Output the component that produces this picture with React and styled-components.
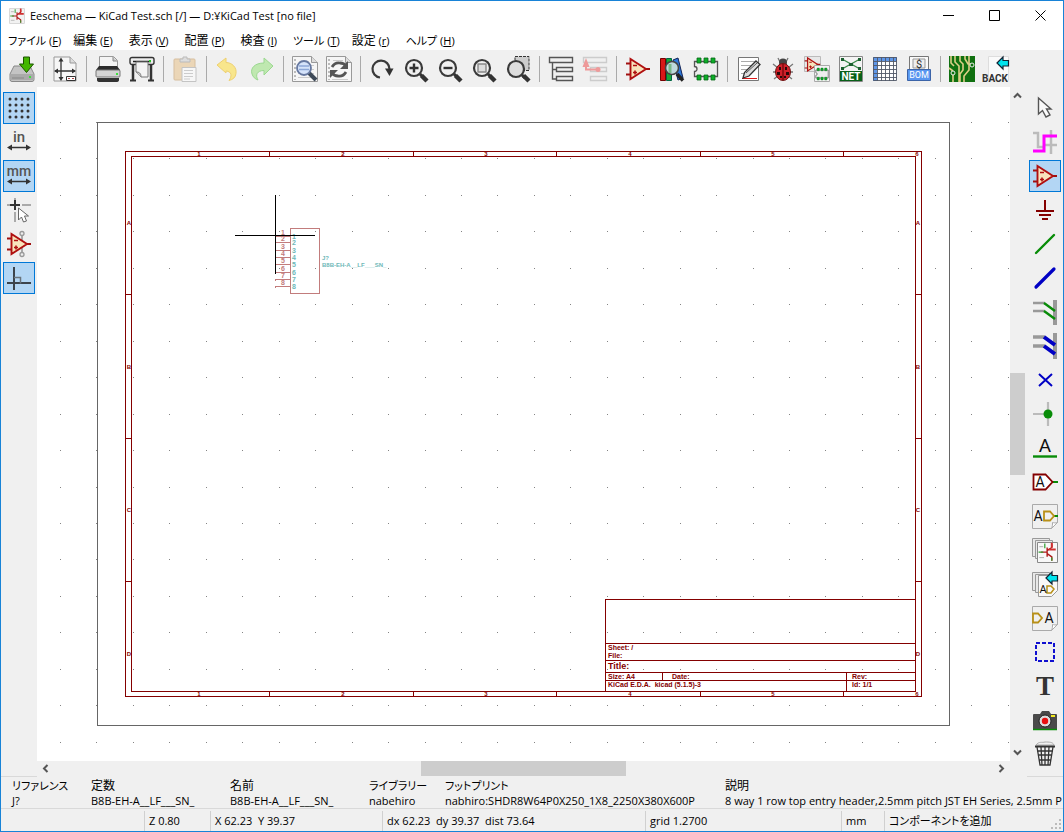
import React from 'react';
import styled, { createGlobalStyle, css } from 'styled-components';

const GlobalStyle = createGlobalStyle`
  * {
    box-sizing: border-box;
  }
  body {
    margin: 0;
    background: #f0f0f0;
    color: #000;
    font-family: 'Open Sans', 'Noto Sans CJK JP', sans-serif;
    font-size: 11px;
    line-height: 16px;
    font-feature-settings: 'palt';
  }
  button {
    margin: 0;
    padding: 0;
    border: 0;
    background: transparent;
    color: inherit;
    font: inherit;
    font-feature-settings: inherit;
  }
`;

const RED = '#840000';
const GRAY = '#555';

/* ---------- shared icon pieces ---------- */

const OpAmp = () => (
  <g>
    <path d="M1 7.500h5M1 18.500h5M20 13h5" stroke="#a01010" strokeWidth="1.800" />
    <path d="M5.500 3v20L21 13z" fill="#f8e4bc" stroke="#b01010" strokeWidth="1.900" />
    <path d="M8 9.500h4M8 16.500h4M10 14.500v4" stroke="#b01010" strokeWidth="1.600" />
  </g>
);

const Paper = ({ x = 2, y = 1, w = 22, h = 24, fill = '#f6f6f6' }) => (
  <g>
    <path d={`M${x} ${y}h${w - 6}l6 6v${h - 6}h${-w}z`} fill={fill} stroke="#999" />
    <path d={`M${x + w - 6} ${y}v6h6`} fill="#ddd" stroke="#999" />
  </g>
);

// sheet with the folded corner at the bottom
const Card = () => (
  <g>
    <path d="M.5 1.500h25v18l-6 6h-19z" fill="#f0f0f0" stroke="#aaa" />
    <path d="M25.500 19.500c-2 1-4 0-5 0 0 2 0 4-1 6z" fill="#fff" stroke="#aaa" />
  </g>
);

const Lens = ({ cx = 11, cy = 12, r = 8, fill = '#f0f0f0' }) => (
  <g>
    <path d={`M${cx + 6} ${cy + 6}l3 3`} stroke="#333" strokeWidth="3" />
    <path d="M18.500 19.500L24 25" stroke="#333" strokeWidth="4.500" />
    <circle cx={cx} cy={cy} r={r} fill={fill} stroke="#3a3a3a" strokeWidth="2.200" />
  </g>
);

const Chip = () => (
  <g>
    <path d="M1.500 5.500h23v15h-23v-5a2.500 2.500 0 0 0 0-5z" fill="#eee" stroke="#555" strokeWidth="1.300" />
    <path
      d="M4 2h4v5H4zM11 2h4v5h-4zM18 2h4v5h-4zM4 19h4v5H4zM11 19h4v5h-4zM18 19h4v5h-4z"
      fill="#0cae28"
      stroke="#086818"
      strokeWidth=".8"
    />
  </g>
);

const BackArrow = () => (
  <path d="M14 7l6-6v3.500h5.500v5.500H20V13z" fill="#00e4ee" stroke="#123" strokeWidth="1.200" />
);

const Sheets = () => (
  <g fill="#e8e8e8" stroke="#999">
    <path d="M.5 1.500h17v18H.5z" />
    <path d="M3.500 3.500h17v18h-17z" />
  </g>
);

const Schematic = () => (
  <g fill="none">
    <path d="M13 7v12M5 13h8M13 11l6-4V3M13 15l6 4v5" stroke="#b01818" strokeWidth="1.800" />
    <path d="M15 9.500h9M19 1v6" stroke="#d03030" strokeWidth="2.600" />
    <path d="M2 13h6M10 2v6M19 24v-4" stroke="#30a030" strokeWidth="1.600" />
    <path d="M3 6h5M3 20h6" stroke="#999" />
  </g>
);

const DimensionArrow = () => (
  <g>
    <path d="M3 18.500h20" stroke="#333" strokeWidth="1.500" />
    <path d="M1 18.500l5-3v6zM25 18.500l-5-3v6z" fill="#333" />
  </g>
);

const icons = {
  save: (
    <g>
      <path d="M5 10h16l4 8v5.500q0 2-2 2H3q-2 0-2-2V18z" fill="#c4c4c4" stroke="#888" />
      <path d="M1.500 18h23v6h-23z" fill="#aaa" />
      <path d="M3 22h12" stroke="#888" />
      <path d="M20 20h2v2h-2z" fill="#3fe03f" />
      <path d="M14.500 1h6v7h4l-7 8.500-7-8.500h4z" fill="#43b600" stroke="#1d5400" />
    </g>
  ),
  page: (
    <g>
      <Paper />
      <path d="M9 3v20M3 15h20" stroke="#333" strokeWidth="1.300" />
      <path d="M9 1.500l2.500 4h-5zM9 25l2.500-4h-5zM2 15l4-2.500v5zM24 15l-4-2.500v5z" fill="#333" />
      <path d="M14.500 20.500h9v4h-9z" fill="#fff" stroke="#333" />
      <path d="M16 22.500h2M20 22.500h2" stroke="#a44" />
    </g>
  ),
  print: (
    <g>
      <path d="M4.500 11V.5h14l4 4V11z" fill="#f4f4f4" stroke="#999" />
      <path d="M18 1v4h4" fill="#ccc" stroke="#888" />
      <path d="M4 10h18l3 4v5H1v-5z" fill="#2c2c2c" />
      <rect x="1" y="14" width="24" height="7" rx="1" fill="#d4d4d4" stroke="#777" />
      <path d="M2 22h22v2q0 2-3 2H5q-3 0-3-2z" fill="#333" />
      <path d="M21 17h2v2h-2z" fill="#3fe03f" />
    </g>
  ),
  plot: (
    <g>
      <path d="M4 7v17M22 7v17" stroke="#333" strokeWidth="2.500" />
      <path d="M1 24.500h6M19 24.500h6" stroke="#333" strokeWidth="2" />
      <rect x="1" y="1.500" width="24" height="7" rx="2" fill="#eee" stroke="#333" strokeWidth="1.400" />
      <path d="M4 5.500h18" stroke="#222" strokeWidth="1.500" />
      <path d="M7 6h12v15h-7l-5-5z" fill="#f4f4f4" stroke="#777" />
      <path d="M7 16c3 0 5 1 5 5" fill="#ccc" stroke="#777" />
      <path d="M20 4h2v2h-2z" fill="#2ac82a" />
    </g>
  ),
  paste: (
    <g opacity=".5">
      <rect x="2" y="3" width="21" height="21" rx="1" fill="#e8bd80" stroke="#c09050" />
      <path d="M8 6V3h3V1h4v2h3v3z" fill="#ccc" stroke="#888" />
      <path d="M10 11.500h14v14H10z" fill="#fff" stroke="#999" />
      <path d="M12 14.500h9M12 17.500h9M12 20.500h9M12 23h6" stroke="#aaa" />
    </g>
  ),
  undo: (
    <path d="M2 9l9-7v4.500c6 0 11 5 10 11-.5 4-3 6-7 7 3-4 3-9-3-9.500V17z" fill="#f8e68c" stroke="#eed070" />
  ),
  redo: (
    <path d="M24 10l-9-8v5C6 7 1 12 3 18c1 3 3 5 6 6-3-5-1-9.500 6-9.500V19z" fill="#bfe8b0" stroke="#9bd890" />
  ),
  find: (
    <g>
      <Paper x={0.5} y={0.5} w={25} h={25} />
      <path d="M3 3v21" stroke="#bbb" strokeWidth="2" strokeDasharray="2 2" />
      <path d="M7 5.500h10M6 9.500h16M6 13.500h16M6 17.500h16M6 21.500h16" stroke="#ccc" />
      <path d="M17 17l7 7" stroke="#3e4a58" strokeWidth="4" />
      <circle cx="12" cy="12" r="7" fill="#d5e3fa" stroke="#6678a0" strokeWidth="1.800" />
      <path d="M7 10h10M7 13.500h10" stroke="#8ca7d8" strokeWidth="1.400" />
    </g>
  ),
  replace: (
    <g>
      <Paper x={0.5} y={0.5} w={25} h={25} />
      <path d="M3 3v21" stroke="#bbb" strokeWidth="2" strokeDasharray="2 2" />
      <path d="M7 4.500h10M6 23.500h16" stroke="#ccc" />
      <path d="M6 11q3-5 8-4 4 0 6 3M20 16q-3 5-8 4-4 0-6-3" fill="none" stroke="#555" strokeWidth="2.800" />
      <path d="M22 5v8h-8zM4 22v-8h8z" fill="#555" />
    </g>
  ),
  refresh: (
    <g>
      <path d="M11 21.500A8.500 8.500 0 1 1 20.500 13" fill="none" stroke="#3a3a3a" strokeWidth="2.200" />
      <path d="M16 12.500h8.500L20.500 20z" fill="#333" />
    </g>
  ),
  zoomIn: (
    <g>
      <Lens />
      <path d="M6.500 12h9M11 7.500v9" stroke="#333" strokeWidth="2.400" />
    </g>
  ),
  zoomOut: (
    <g>
      <Lens />
      <path d="M6.500 12h9" stroke="#333" strokeWidth="2.400" />
    </g>
  ),
  zoomFit: (
    <g>
      <Lens />
      <path d="M7 8h8v8H7z" fill="#ddd" stroke="#888" strokeWidth="1.400" />
    </g>
  ),
  zoomArea: (
    <g>
      <path d="M10 .5h14v14H10z" fill="#ccc" stroke="#333" strokeDasharray="3 1" />
      <Lens cy={13} fill="#ddd" />
    </g>
  ),
  hierarchy: (
    <g fill="none" stroke="#555" strokeWidth="1.400">
      <path d="M1.500 1.500h23v5h-23zM8.500 11.500h16v4h-16zM8.500 20.500h16v4h-16zM4.500 7v16h4M4.500 13.500h4" />
    </g>
  ),
  leave: (
    <g fill="none">
      <path d="M1.500 1.500h23v5h-23zM8.500 11.500h16v4h-16zM8.500 20.500h16v4h-16z" stroke="#ccc" strokeWidth="1.400" />
      <path d="M4 7v6.500h12" stroke="#ee9a9a" strokeWidth="2" />
      <path d="M4 2l3.500 9h-7z" fill="#ee9a9a" />
      <circle cx="16" cy="13.500" r="2.500" fill="#ee9a9a" />
    </g>
  ),
  opamp: <OpAmp />,
  library: (
    <g>
      <path d="M1.500 2.500h5v22h-5z" fill="#d81818" stroke="#700" />
      <path d="M7.500 2.500h5v22h-5z" fill="#18a838" stroke="#064" />
      <path d="M14 4l5-2 5 20-5 2z" fill="#2c78dc" stroke="#125" />
      <path d="M18 18l6 6.500" stroke="#222" strokeWidth="3.500" />
      <circle cx="13" cy="12" r="6.500" fill="#bed8dc" stroke="#444" strokeWidth="1.600" />
      <path d="M11 8v9" stroke="#78b888" strokeWidth="3" />
    </g>
  ),
  chip: <Chip />,
  edit: (
    <g>
      <path d="M2.500 1.500h20v23h-20z" fill="#fff" stroke="#777" />
      <path d="M5 5.500h15M5 9.500h13M5 13.500h8M5 17.500h5" stroke="#aaa" />
      <path d="M6 22.500h15" stroke="#e01818" />
      <path d="M20 5l4 3.500L13 20l-6 2 1.500-5.500z" fill="#ddd" stroke="#333" strokeWidth="1.300" />
      <path d="M10 17L21 7" stroke="#555" />
    </g>
  ),
  bug: (
    <g>
      <path d="M8 2l2 4M18 2l-2 4M3 8l5 4M23 8l-5 4M3 16h20M4 23l5-4M22 23l-5-4" stroke="#777" strokeWidth="1.300" />
      <circle cx="13" cy="6.500" r="4" fill="#444" />
      <ellipse cx="13" cy="16" rx="7.500" ry="8.500" fill="#d0202a" stroke="#701010" />
      <path d="M13 8v16" stroke="#500" />
      <path d="M9 11h2v3H9zM15 11h2v3h-2zM7 16h3v3H7zM16 16h3v3h-3zM10 20h2v2h-2zM14 20h2v2h-2z" fill="#2a0a0a" />
    </g>
  ),
  assign: (
    <g>
      <path d="M.5.5h16v15H.5z" fill="#e8e8e8" stroke="#bbb" />
      <g transform="scale(.65)">
        <OpAmp />
      </g>
      <path d="M10.500 9.500h15v16h-15z" fill="#f4f4f4" stroke="#aaa" />
      <g transform="translate(11 11) scale(.54)">
        <Chip />
      </g>
    </g>
  ),
  net: (
    <g>
      <path d="M1.500.5h23v25h-23z" fill="#f4f4f4" stroke="#888" />
      <path d="M4 3l9 5 9-5M4 13l9-5 9 5" fill="none" stroke="#3a8a4a" strokeWidth="1.300" />
      <path d="M3 2h3v3H3zM20 2h3v3h-3zM3 11h3v3H3zM20 11h3v3h-3zM11 7h4v3h-4z" fill="#1c6030" />
      <path d="M2 15h22v10H2z" fill="#086018" />
      <text x="13" y="24" fontSize="10" fontWeight="700" textAnchor="middle" fill="#fff">
        NET
      </text>
    </g>
  ),
  table: (
    <g>
      <path d="M1.500 1.500h23v23h-23z" fill="#fff" />
      <path d="M1 1h24v4H5v20H1z" fill="#5f97e8" />
      <path
        d="M1.500 1.500h23v23h-23zM1 5.500h24M1 9.500h24M1 13.500h24M1 17.500h24M1 21.500h24M5.500 1v24M9.500 1v24M13.500 1v24M17.500 1v24M21.500 1v24"
        fill="none"
        stroke="#505868"
        strokeWidth=".9"
      />
    </g>
  ),
  bom: (
    <g>
      <path d="M3.500.5h19v15h-19z" fill="#fafafa" stroke="#777" />
      <path d="M7 3h12v9H7z" fill="#eee" stroke="#999" />
      <path d="M1.500 13.500h23v11h-23z" fill="#5a96f0" stroke="#3c64a8" />
      <text x="13" y="12" fontSize="11" textAnchor="middle" fill="#333">
        $
      </text>
      <text x="13" y="22" fontSize="9" textAnchor="middle" fill="#fff">
        BOM
      </text>
    </g>
  ),
  pcb: (
    <g>
      <path d="M0 0h26v26H0z" fill="#107010" />
      <path
        d="M2 0v7l3 3M6 0v6l4 4v16M11 0v5l3 3v6l-3 4v8M16 0v3l3 5h4M0 12l4 3M4 17v9M15 26v-6l5-6V0"
        fill="none"
        stroke="#dccf86"
        strokeWidth="1.600"
      />
      <circle cx="23" cy="9" r="2" fill="#107010" stroke="#eee" />
      <circle cx="4" cy="17" r="2" fill="#107010" stroke="#eee" />
    </g>
  ),
  back: (
    <g>
      <path d="M5.500.5h20v24h-20z" fill="#fafafa" stroke="#ddd" />
      <BackArrow />
      <text x="12" y="26" fontSize="10" fontWeight="700" textAnchor="middle" fill="#333">
        BACK
      </text>
    </g>
  ),
  grid: (
    <path
      d="M4 4h19M4 10h19M4 16h19M4 22h19"
      stroke="#333"
      strokeWidth="3"
      strokeLinecap="round"
      strokeDasharray="0 6"
    />
  ),
  inches: (
    <g>
      <text x="13" y="13" fontSize="15" fontWeight="500" textAnchor="middle" fill={GRAY}>
        in
      </text>
      <DimensionArrow />
    </g>
  ),
  mm: (
    <g>
      <text x="13" y="13" fontSize="14" fontWeight="500" textAnchor="middle" fill={GRAY}>
        mm
      </text>
      <DimensionArrow />
    </g>
  ),
  cursorShape: (
    <g>
      <path d="M1 8h3M16 8h9M9 1v2M9 15v10" stroke="#aaa" strokeWidth="2" />
      <path d="M4 8h10M9 3v10" stroke="#333" strokeWidth="2" />
      <path d="M12.500 11v12l3-3 2 5 3-1-2-5h4z" fill="#fff" stroke="#666" />
    </g>
  ),
  hiddenPins: (
    <g>
      <path d="M16 3v20" stroke="#aaa" strokeWidth="2" />
      <OpAmp />
      <circle cx="16" cy="2.500" r="2" fill="#eee" stroke="#999" strokeWidth="1.300" />
      <circle cx="16" cy="23.500" r="2" fill="#eee" stroke="#999" strokeWidth="1.300" />
    </g>
  ),
  ortho: (
    <g fill="none">
      <path d="M8 2v23M1 18h24" stroke="#3c444c" strokeWidth="2" />
      <path d="M8 12.500h6.500v6" stroke="#6a747c" strokeWidth="1.500" />
    </g>
  ),
  pointer: <path d="M6.500 3v16l4-3.500 3.500 6.500 4-2-3.500-6H19z" fill="#fafafa" stroke="#555" strokeWidth="1.400" />,
  highlight: (
    <g fill="none">
      <path d="M1 4h5v14h6M19 1v24M12 16h13" stroke="#bbb" strokeWidth="2.500" />
      <path d="M1 22h11V7h13" stroke="#f0f" strokeWidth="3" />
    </g>
  ),
  ground: <path d="M13 3v11M4 14h18M7 18h12M10 22h6" stroke={RED} strokeWidth="2" fill="none" />,
  wire: <path d="M4 22L22 4" stroke="#088c08" strokeWidth="2.400" strokeLinecap="round" />,
  bus: <path d="M4 22L22 4" stroke="#0000c4" strokeWidth="3.200" strokeLinecap="round" />,
  wireEntry: (
    <g>
      <path d="M23 1v25" stroke="#999" strokeWidth="4" />
      <path d="M1 4h12M1 12h12" stroke="#999" strokeWidth="2.400" />
      <path d="M12 4l11 8M12 12l11 8" stroke="#088c08" strokeWidth="2.400" />
    </g>
  ),
  busEntry: (
    <g>
      <path d="M23 0v26" stroke="#999" strokeWidth="4" />
      <path d="M1 4h12M1 13h12" stroke="#999" strokeWidth="3.500" />
      <path d="M12 4l11 8M12 13l11 8" stroke="#0000c4" strokeWidth="4" />
    </g>
  ),
  noConnect: <path d="M7 7l13 12M20 7L7 19" stroke="#0000c4" strokeWidth="2" />,
  junction: (
    <g>
      <path d="M1 13h15M16 1v24" stroke="#bbb" strokeWidth="2.200" />
      <circle cx="16" cy="13" r="4.500" fill="#088c08" />
    </g>
  ),
  label: (
    <g>
      <text x="13" y="17" fontSize="19" textAnchor="middle" fill="#111">
        A
      </text>
      <path d="M1 21.500h24" stroke="#088c08" strokeWidth="2.400" />
    </g>
  ),
  globalLabel: (
    <g>
      <path d="M20 13h6" stroke="#088c08" strokeWidth="2" />
      <path d="M1.500 5.500h12l7 7.500-7 7.500h-12z" fill="#fff" stroke={RED} strokeWidth="1.800" />
      <text x="8" y="18" fontSize="14" textAnchor="middle" fill="#111">
        A
      </text>
    </g>
  ),
  hierLabel: (
    <g>
      <Card />
      <path d="M22 13h4" stroke="#088c08" strokeWidth="2" />
      <path d="M12 8.500h6l4 4.500-4 4.500h-6z" fill="none" stroke="#b89018" strokeWidth="1.800" />
      <text x="6" y="18" fontSize="14" textAnchor="middle" fill="#111">
        A
      </text>
    </g>
  ),
  sheet: (
    <g>
      <Sheets />
      <path d="M5.500 5.500h20v20h-20z" fill="#f8f8f8" stroke="#888" />
      <g transform="translate(5 5) scale(.78)">
        <Schematic />
      </g>
    </g>
  ),
  importPin: (
    <g>
      <Sheets />
      <path d="M6.500 4.500h19v15l-6 6h-13z" fill="#f8f8f8" stroke="#999" />
      <path d="M15 15h4l3 3-3 4h-4z" fill="none" stroke="#b89018" strokeWidth="1.500" />
      <BackArrow />
      <text x="11" y="22" fontSize="11" textAnchor="middle" fill="#111">
        A
      </text>
    </g>
  ),
  sheetPin: (
    <g>
      <Card />
      <path d="M1 8.500h5l4 4.500-4 4.500H1z" fill="none" stroke="#b89018" strokeWidth="1.800" />
      <text x="17" y="18" fontSize="14" textAnchor="middle" fill="#111">
        A
      </text>
    </g>
  ),
  lines: <path d="M4 4h18v18H4z" fill="none" stroke="#1010d0" strokeWidth="2" strokeDasharray="4 2" />,
  text: (
    <text x="13" y="22" fontSize="27" fontFamily="Liberation Serif, serif" fontWeight="700" textAnchor="middle" fill="#333">
      T
    </text>
  ),
  image: (
    <g>
      <path d="M8 7l2-3h7l2 3h5q1 0 1 1v14H1V8q0-1 1-1z" fill="#4a4a4a" />
      <path d="M1 22.500h24" stroke="#088c08" strokeWidth="1.500" />
      <circle cx="13" cy="14" r="6" fill="#ddd" stroke="#222" />
      <circle cx="13" cy="14" r="3.200" fill="#e81010" />
      <path d="M19 8h4v2h-4z" fill="#f4ea20" />
    </g>
  ),
  trash: (
    <g fill="none">
      <path d="M4 4c3-4 6-2 9-3 4 0 8 0 9 3z" fill="#f0f0f0" stroke="#aaa" />
      <path d="M3 5.500h20" stroke="#333" strokeWidth="2" />
      <path d="M5 6l3 18h10l3-18M9 6l1 18M13 6v18M17 6l-1 18M5 10h16M6 14h14M7 19h12" stroke="#333" strokeWidth="1.300" />
    </g>
  ),
};

const Icon = ({ name }) => (
  <IconSvg width="26" height="26" viewBox="0 0 26 26" aria-hidden="true">
    {icons[name]}
  </IconSvg>
);

/* ---------- data ---------- */

const menus = [
  ['ファイル', 'F'],
  ['編集', 'E'],
  ['表示', 'V'],
  ['配置', 'P'],
  ['検査', 'I'],
  ['ツール', 'T'],
  ['設定', 'r'],
  ['ヘルプ', 'H'],
];

const toolGroups = [
  ['save'],
  ['page'],
  ['print', 'plot'],
  ['paste'],
  ['undo', 'redo'],
  ['find', 'replace'],
  ['refresh', 'zoomIn', 'zoomOut', 'zoomFit', 'zoomArea'],
  ['hierarchy', 'leave'],
  ['opamp', 'library', 'chip'],
  ['edit', 'bug', 'assign', 'net', 'table', 'bom'],
  ['pcb', 'back'],
];

const leftTools = ['grid', 'inches', 'mm', 'cursorShape', 'hiddenPins', 'ortho'];
const leftActive = ['grid', 'mm', 'ortho'];

const rightTools = [
  'pointer',
  'highlight',
  'opamp',
  'ground',
  'wire',
  'bus',
  'wireEntry',
  'busEntry',
  'noConnect',
  'junction',
  'label',
  'globalLabel',
  'hierLabel',
  'sheet',
  'importPin',
  'sheetPin',
  'lines',
  'text',
  'image',
  'trash',
];

const messages = [
  ['リファレンス', 'J?'],
  ['定数', 'B8B-EH-A__LF___SN_'],
  ['名前', 'B8B-EH-A__LF___SN_'],
  ['ライブラリー', 'nabehiro'],
  ['フットプリント', 'nabhiro:SHDR8W64P0X250_1X8_2250X380X600P'],
  ['説明', '8 way 1 row top entry header,2.5mm pitch JST EH Series, 2.5mm P'],
];

const isKana = (text) => /^[\u30a0-\u30ff]/.test(text);

/* ---------- drawing area ---------- */

const GRID_STEP = 36.45;
const dots = [];
for (let row = 0; row < 40; row += 1) {
  for (let col = 0; col < 60; col += 1) {
    dots.push(`M${Math.round(23 + col * GRID_STEP)} ${Math.round(35 + row * GRID_STEP)}h1v1h-1z`);
  }
}

const columnMarks = [102, 246, 389, 533, 676, 820];
const rowMarks = [101, 245, 388, 532];
const pinRows = [114, 120, 128, 135, 142, 150, 157, 164];

function Sheet() {
  return (
    <SheetSvg role="img" aria-label="KiCad Test.sch">
      <path d={dots.join('')} fill="#848484" />
      <g transform="translate(60 35)">
        <path d="M.5.5h852v603H.5z" stroke="#666" />
        <g stroke={RED}>
          <path d="M28.500 29.500h796v545h-796zM34.500 34.500h784v535h-784z" />
          <path d="M172.500 29v5M316.500 29v5M459.500 29v5M603.500 29v5M746.500 29v5" />
          <path d="M172.500 569v6M316.500 569v6M459.500 569v6M603.500 569v6M746.500 569v6" />
          <path d="M29 172.500h6M29 316.500h6M29 459.500h6M818 172.500h6M818 316.500h6M818 459.500h6" />
          <path d="M508.500 569V477.500h310M508 521.500h310M508 538.500h310M508 550.500h310M508 558.500h310" />
          <path d="M565.500 550v8M749.500 550v19" />
        </g>
        {columnMarks.map((x, i) => (
          <React.Fragment key={x}>
            <Mark x={x} y="34">{i + 1}</Mark>
            <Mark x={x} y="574">{i + 1}</Mark>
          </React.Fragment>
        ))}
        {rowMarks.map((y, i) => (
          <React.Fragment key={y}>
            <Mark x="32" y={y + 2}>{'ABCD'[i]}</Mark>
            <Mark x="821" y={y + 2}>{'ABCD'[i]}</Mark>
          </React.Fragment>
        ))}
        <Plain x="511" y="528">Sheet: /</Plain>
        <Plain x="511" y="536">File:</Plain>
        <Title x="511" y="547">Title:</Title>
        <Plain x="511" y="557">Size: A4</Plain>
        <Plain x="575" y="557">Date:</Plain>
        <Plain x="755" y="557">Rev:</Plain>
        <Plain x="511" y="565">KiCad E.D.A.  kicad (5.1.5)-3</Plain>
        <Plain x="755" y="565">Id: 1/1</Plain>

        <path d="M193.500 106.500h29v65h-29z" stroke="#c27c7c" />
        {pinRows.map((y, i) => (
          <React.Fragment key={y}>
            <path d={`M178 ${y + 0.5}h15M178.500 ${y}v2`} stroke="#c27c7c" />
            <PinNumber x="186" y={y - 1}>{i + 1}</PinNumber>
            <PinName x="195" y={y + 3}>{i + 1}</PinName>
          </React.Fragment>
        ))}
        <FieldText x="225" y="138">J?</FieldText>
        <FieldText x="225" y="145">B8B-EH-A__LF___SN_</FieldText>
        <path d="M178.500 73v79M138 113.500h80" stroke="#000" />
      </g>
    </SheetSvg>
  );
}

const Chevron = ({ d }) => (
  <svg width="9" height="9" viewBox="0 0 9 9" aria-hidden="true">
    <path d={d} fill="none" stroke="#555" strokeWidth="2" />
  </svg>
);

const SideBar = ({ tools, active, label }) => (
  <SideTools aria-label={label}>
    {tools.map((name) => (
      <SideButton key={name} aria-label={name} $active={active.includes(name)}>
        <Icon name={name} />
      </SideButton>
    ))}
  </SideTools>
);

function App() {
  return (
    <Window>
      <GlobalStyle />
      <TitleBar>
        <svg width="16" height="16" viewBox="0 0 26 26" aria-hidden="true">
          <rect x=".5" y=".5" width="25" height="25" rx="2" fill="#f2f2f2" stroke="#bbb" />
          <Schematic />
        </svg>
        <Caption>Eeschema — KiCad Test.sch [/] — D:¥KiCad Test [no file]</Caption>
        <CaptionButton aria-label="minimize">
          <svg width="11" height="11"><path d="M0 5.500h11" stroke="#000" /></svg>
        </CaptionButton>
        <CaptionButton aria-label="maximize">
          <svg width="11" height="11"><path d="M.5.5h10v10H.5z" fill="none" stroke="#000" /></svg>
        </CaptionButton>
        <CaptionButton aria-label="close">
          <svg width="11" height="11"><path d="M.5.5l10 10M10.500.5l-10 10" stroke="#000" /></svg>
        </CaptionButton>
      </TitleBar>

      <MenuBar>
        {menus.map(([name, key]) => (
          <MenuButton key={name} $kana={isKana(name)}>
            <Name $kana={isKana(name)}>{name}</Name> (<u>{key}</u>)
          </MenuButton>
        ))}
      </MenuBar>

      <ToolBar>
        {toolGroups.map((group) => (
          <ToolGroup key={group[0]}>
            {group.map((name) => (
              <ToolButton key={name} aria-label={name}>
                <Icon name={name} />
              </ToolButton>
            ))}
          </ToolGroup>
        ))}
      </ToolBar>

      <Workspace>
        <SideBar tools={leftTools} active={leftActive} label="options" />
        <Editor>
          <Canvas>
            <Sheet />
          </Canvas>
          <ScrollBar $vertical>
            <ScrollButton aria-label="scroll up"><Chevron d="M1 6.500l3.500-3.500L8 6.500" /></ScrollButton>
            <Track $grow={8} />
            <Thumb $grow={3} />
            <Track $grow={8} />
            <ScrollButton aria-label="scroll down"><Chevron d="M1 2.500L4.500 6 8 2.500" /></ScrollButton>
          </ScrollBar>
          <ScrollBar>
            <ScrollButton aria-label="scroll left"><Chevron d="M6.500 1L3 4.500 6.500 8" /></ScrollButton>
            <Track $grow={9} />
            <Thumb $grow={5} />
            <Track $grow={9} />
            <ScrollButton aria-label="scroll right"><Chevron d="M2.500 1L6 4.500 2.500 8" /></ScrollButton>
          </ScrollBar>
        </Editor>
        <SideBar tools={rightTools} active={['opamp']} label="drawing tools" />
      </Workspace>

      <MessagePanel>
        {messages.map(([name, value]) => (
          <Message key={name}>
            <dt><Name $kana={isKana(name)}>{name}</Name></dt>
            <dd>{value}</dd>
          </Message>
        ))}
      </MessagePanel>

      <StatusBar>
        <StatusField />
        <StatusField>Z 0.80</StatusField>
        <StatusField>X 62.23  Y 39.37</StatusField>
        <StatusField>dx 62.23  dy 39.37  dist 73.64</StatusField>
        <StatusField>grid 1.2700</StatusField>
        <StatusField>mm</StatusField>
        <StatusField><Name $kana>コンポーネントを追加</Name></StatusField>
        <svg width="12" height="12" aria-hidden="true">
          <path d="M8 0h2v2H8zM4 4h2v2H4zM8 4h2v2H8zM0 8h2v2H0zM4 8h2v2H4zM8 8h2v2H8z" fill="#bbb" />
        </svg>
      </StatusBar>
    </Window>
  );
}

const Window = styled.div`
  display: flex;
  flex-direction: column;
  height: 100vh;
  border: 1px solid #1883d7;
  overflow: hidden;
`;

const TitleBar = styled.header`
  display: flex;
  align-items: center;
  height: 29px;
  padding-left: 8px;
  background: #fff;
`;

const Caption = styled.h1`
  flex: 1;
  margin: 0 0 0 5px;
  font-size: 11px;
  font-weight: 400;
`;

const CaptionButton = styled.button`
  display: flex;
  align-items: center;
  justify-content: center;
  width: 46px;
  height: 29px;
`;

const Name = styled.span`
  font-size: ${(props) => (props.$kana ? '11px' : '12px')};
`;

const MenuBar = styled.nav`
  display: flex;
  height: 20px;
  padding: 0 7px;
  background: #fff;
`;

const MenuButton = styled.button`
  padding: 1px 0 0;
  margin-right: ${(props) => (props.$kana ? '12px' : '16px')};
  line-height: 20px;
  white-space: nowrap;
`;

const ToolBar = styled.div`
  display: flex;
  align-items: center;
  height: 37px;
  padding: 0 4px;
`;

const ToolGroup = styled.div`
  display: flex;
  & + & {
    margin-left: 4px;
    padding-left: 4px;
    border-left: 1px solid #aaa;
  }
`;

const ToolButton = styled.button`
  display: flex;
  align-items: center;
  justify-content: center;
  width: 34px;
  height: 26px;
`;

const IconSvg = styled.svg`
  flex-shrink: 0;
  overflow: visible;
  font-family: Roboto, sans-serif;
`;

const Workspace = styled.main`
  flex: 1;
  display: flex;
  min-height: 0;
`;

const SideTools = styled.div`
  display: flex;
  flex-direction: column;
  gap: 2px;
  width: 36px;
  padding: 5px 2px;
  border-bottom: 1px solid #d9d9d9;
`;

const SideButton = styled.button`
  display: flex;
  flex-shrink: 0;
  align-items: center;
  justify-content: center;
  width: 32px;
  height: 32px;
  ${(props) =>
    props.$active &&
    css`
      border: 1px solid #0078d7;
      background: #b3d6f4;
    `}
`;

const Editor = styled.section`
  flex: 1;
  display: grid;
  grid-template-columns: 1fr 17px;
  grid-template-rows: 1fr 16px;
  min-width: 0;
`;

const Canvas = styled.div`
  min-width: 0;
  min-height: 0;
  overflow: hidden;
  background: #fff;
`;

const ScrollBar = styled.div`
  display: flex;
  flex-direction: ${(props) => (props.$vertical ? 'column' : 'row')};
  padding: ${(props) => (props.$vertical ? '0 2px 0 0' : '0 0 1px')};
`;

const ScrollButton = styled.button`
  display: flex;
  flex: 0 0 17px;
  align-items: center;
  justify-content: center;
`;

const Track = styled.div`
  flex: ${(props) => props.$grow};
`;

const Thumb = styled(Track)`
  background: #cdcdcd;
`;

const SheetSvg = styled.svg`
  display: block;
  width: 100%;
  height: 100%;
  fill: none;
  shape-rendering: crispEdges;
`;

const SheetText = styled.text`
  font-family: 'Liberation Sans', sans-serif;
  font-size: 7px;
  font-weight: 700;
  white-space: pre;
`;

const Plain = styled(SheetText)`
  fill: ${RED};
`;

const Mark = styled(Plain)`
  font-size: 6px;
  text-anchor: middle;
`;

const Title = styled(Plain)`
  font-size: 9px;
`;

const PinNumber = styled(SheetText)`
  fill: #c27c7c;
  text-anchor: middle;
`;

const PinName = styled(SheetText)`
  fill: #6fb8b8;
`;

const FieldText = styled(PinName)`
  font-size: 6px;
`;

const MessagePanel = styled.dl`
  display: grid;
  grid-template-columns: 79px 139px 139px 76px 280px 1fr;
  height: 32px;
  margin: 0;
  padding-left: 11px;
  white-space: nowrap;
  border-bottom: 1px solid #d9d9d9;
`;

const Message = styled.div`
  min-width: 0;
  dt {
    height: 16px;
    line-height: 18px;
  }
  dd {
    height: 15px;
    margin: 0;
  }
`;

const StatusBar = styled.footer`
  display: grid;
  grid-template-columns: 143px 66px 172px 263px 196px 43px 1fr 12px;
  align-items: end;
  height: 22px;
  white-space: pre;
`;

const StatusField = styled.span`
  height: 20px;
  padding-left: 4px;
  line-height: 20px;
  & + & {
    border-left: 1px solid #d0d0d0;
  }
`;

export default App;
